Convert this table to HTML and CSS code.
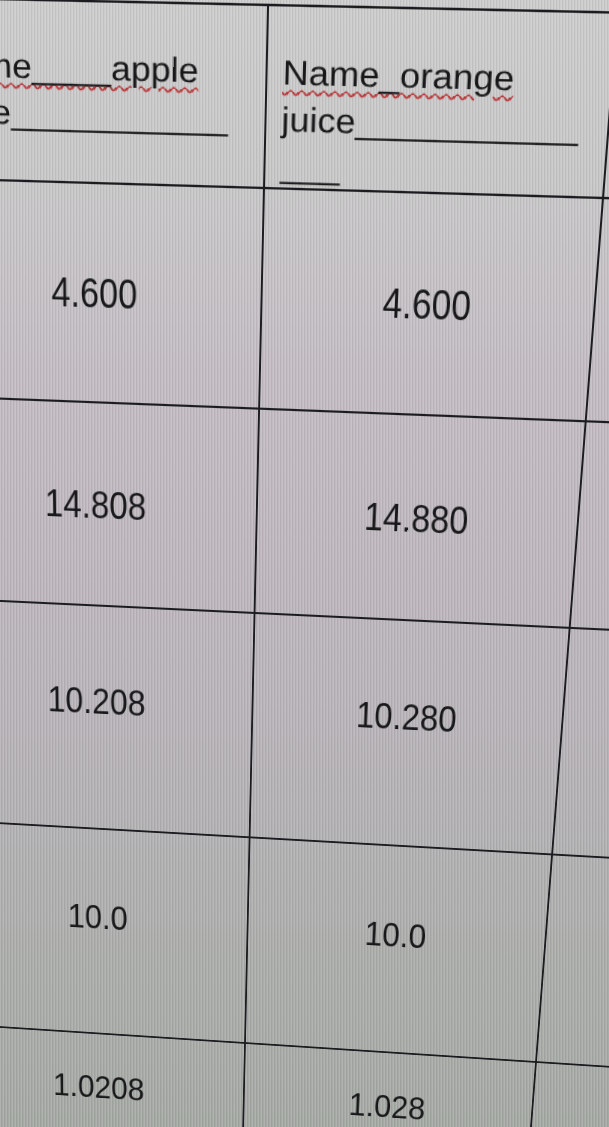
FILE: index.html
```html
<!DOCTYPE html>
<html lang="en">
<head>
<meta charset="utf-8">
<title>Juice table</title>
<link rel="stylesheet" href="styles.css">
</head>
<body>
<div class="stage">
  <div class="sheet">
    <div class="cell head"><div class="hd"><span class="spell">Name____apple</span><br>juice___________</div></div>
    <div class="cell head"><div class="hd"><span class="spell">Name_orange</span><br>juice___________<br>___</div></div>
    <div class="cell"></div>

    <div class="cell num">4.600</div>
    <div class="cell num">4.600</div>
    <div class="cell"></div>

    <div class="cell num">14.808</div>
    <div class="cell num">14.880</div>
    <div class="cell"></div>

    <div class="cell num">10.208</div>
    <div class="cell num">10.280</div>
    <div class="cell"></div>

    <div class="cell num">10.0</div>
    <div class="cell num">10.0</div>
    <div class="cell"></div>

    <div class="cell num tail">1.0208</div>
    <div class="cell num tail">1.028</div>
    <div class="cell"></div>
  </div>
</div>
</body>
</html>
```

FILE: styles.css
```css
* { box-sizing: border-box; }

html, body {
  margin: 0;
  padding: 0;
  width: 609px;
  height: 1127px;
  overflow: hidden;
}

body {
  background-color: #c0bdc0;
  background-image:
    repeating-linear-gradient(90deg, rgba(255,255,255,0.10) 0 1px, rgba(0,0,0,0.06) 1px 2px, rgba(255,255,255,0) 2px 3px),
    linear-gradient(180deg, #cdcdcd 0%, #c9c8c9 16%, #c4bec4 32%, #beb8be 52%, #b6b3b7 70%, #acaeab 86%, #a6aaa5 100%);
  font-family: "Liberation Sans", Arial, sans-serif;
  color: #18181a;
}

.stage {
  width: 609px;
  height: 1127px;
  padding-top: 34px;
  transform-origin: 0 0;
  transform: matrix3d(0.999821, 0.021876, 0, -0.000042261,
                      0.024731, 1.227589, 0, 0.00019395,
                      0, 0, 1, 0,
                      2.0785, -43.805, 0, 1);
}

.sheet {
  display: grid;
  grid-template-columns: 348px 339px 240px;
  grid-template-rows: 153px 197px 196px 232px 230px 200px;
  width: max-content;
  margin-left: -83px;
  border-top: 2.5px solid #1c1c20;
  filter: blur(0.3px);
}

.cell {
  border-right: 2.5px solid #1c1c20;
  border-bottom: 2.5px solid #1c1c20;
}

.head {
  padding: 0 10px 0 15px;
}

.hd {
  padding-top: 44px;
  font-size: 36px;
  line-height: 48.75px;
  white-space: nowrap;
  transform: scaleY(0.8);
  transform-origin: 0 0;
}

.spell {
  text-decoration: underline wavy #b8383a;
  text-decoration-thickness: 1.5px;
  text-underline-offset: 5px;
}

.num {
  display: flex;
  justify-content: center;
  align-items: flex-start;
  padding-top: 76px;
  font-size: 36px;
}

.tail {
  padding-top: 42px;
}
```
